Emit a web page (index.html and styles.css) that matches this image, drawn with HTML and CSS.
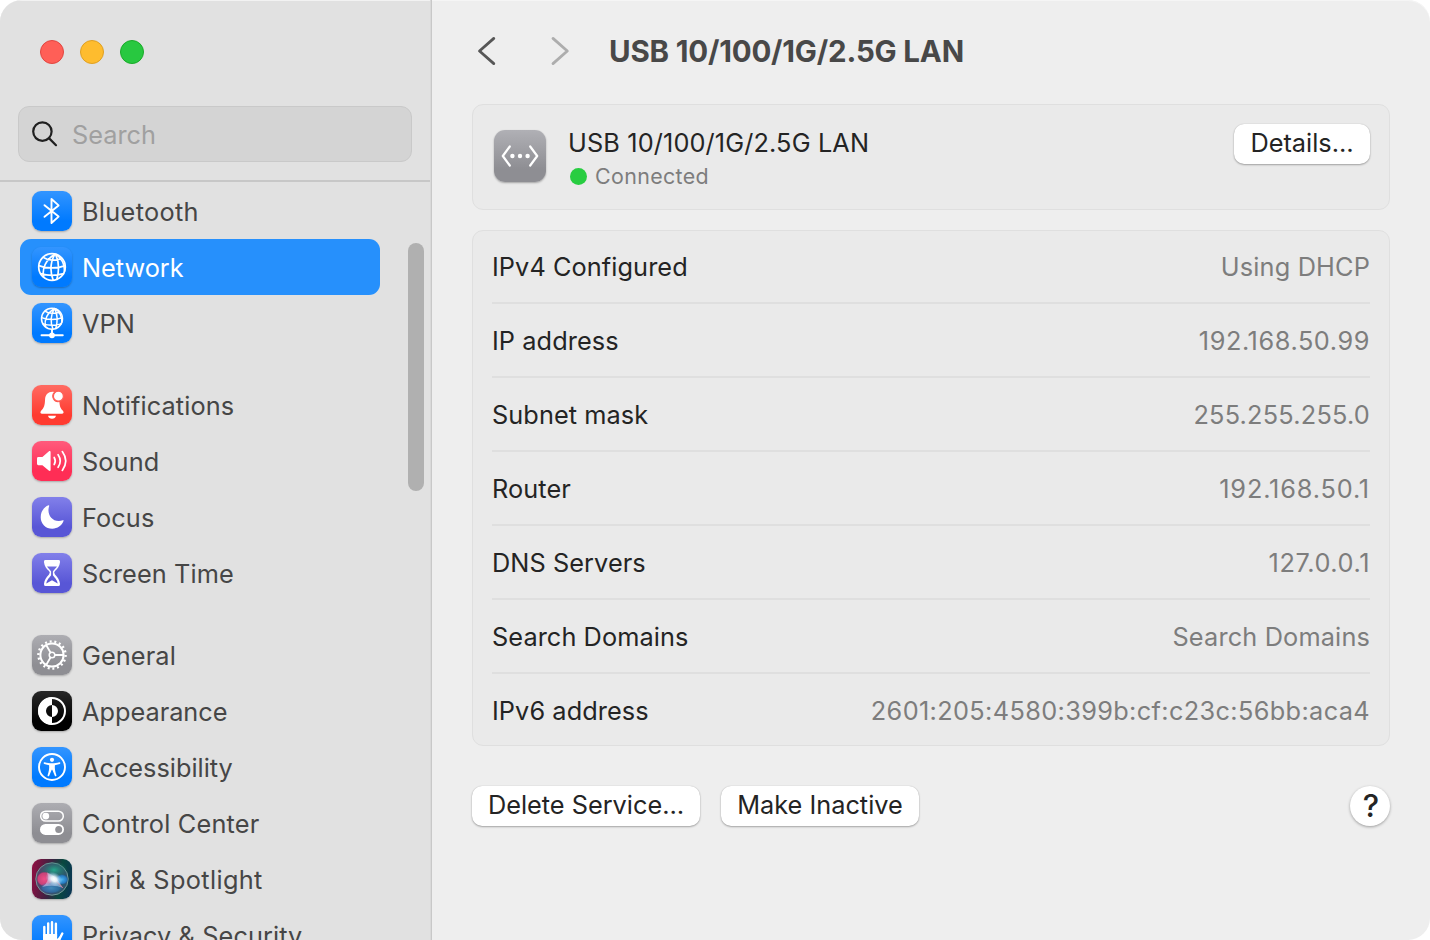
FILE: index.html
```html
<!DOCTYPE html>
<html lang="en">
<head>
<meta charset="utf-8">
<title>Network</title>
<link rel="stylesheet" href="styles.css">
</head>
<body>
<div class="window">
  <aside class="sidebar">
    <div class="lights"><span class="light red"></span><span class="light yellow"></span><span class="light green"></span></div>
    <div class="search">
      <svg class="glass" viewBox="0 0 28 28"><circle cx="11.4" cy="11.6" r="9.2"/><path d="M18.2 18.4L25 25.2"/></svg>
      <span class="search-text">Search</span>
    </div>
    <nav class="list">
      <div class="item"><span class="icon blue"><svg viewBox="0 0 40 40"><path class="line" stroke-width="1.9" d="M12.5 14.2L26.6 25.6L19.5 32V8L26.6 14.4L12.5 25.8"/></svg></span><span class="label wide">Bluetooth</span></div>
      <div class="item selected"><span class="icon blue"><svg viewBox="0 0 40 40"><g class="line" stroke-width="1.7"><circle cx="20" cy="20" r="13.3"/><path d="M22.8 7.2C14 12.5 9.8 21.5 11.6 30M22.8 7.2C18.6 15 18 25 21.2 33.2M23.6 7.4C26.8 14 27.4 23 24.8 32.4M24.5 7.6C30 11.8 32.8 18 32.4 24.5M11.2 10.4C16 13.8 24 14.2 29.5 11.2M6.8 18.6C14 21.8 26 21.6 33 18.6M8.6 26.6C15.5 28.8 25 28.6 31.6 26.6"/></g></svg></span><span class="label tight">Network</span></div>
      <div class="item"><span class="icon blue"><svg viewBox="0 0 40 40"><g class="line" stroke-width="1.5"><circle cx="20" cy="15.7" r="10.5"/><path d="M22.2 5.6C15.3 9.8 12 16.9 13.4 23.6M22.2 5.6C18.9 11.8 18.4 19.6 20.9 26.1M22.8 5.8C25.4 11 25.8 18 23.8 25.5M23.6 5.9C27.9 9.2 30.1 14.1 29.8 19.3M13 8.1C16.8 10.8 23.2 11.1 27.5 8.8M9.6 14.6C15.3 17.1 24.7 17 30.3 14.6M11 20.9C16.4 22.6 23.9 22.5 29.2 20.9"/><path stroke-width="1.9" d="M20 26.5V32M9.5 32.3H30.8"/></g><circle class="fill" cx="20" cy="32.3" r="2.9"/></svg></span><span class="label">VPN</span></div>

      <div class="item group"><span class="icon coral"><svg viewBox="0 0 40 40"><path class="fill" d="M20.5 6.7C16 6.9 13.5 9.5 13.1 13.8C12.8 20.8 12.1 22.6 9.3 25.6C7.8 27.2 8.2 28.8 10.2 28.8H29.8C31.8 28.8 32.2 27.2 30.7 25.6C28.6 23.3 27.8 21.6 27.4 17A6 6 0 0 1 22 6.9C21.5 6.7 21 6.7 20.5 6.7Z"/><path class="fill" d="M16 30.7H24C23.6 32.7 22.1 33.7 20 33.7S16.4 32.7 16 30.7Z"/><circle class="badge" cx="26.4" cy="11.2" r="5"/></svg></span><span class="label">Notifications</span></div>
      <div class="item"><span class="icon pink"><svg viewBox="0 0 40 40"><path class="fill" d="M6.4 16H10.4L16.7 10.4C17.7 9.6 18.6 10 18.6 11.2V28.8C18.6 30 17.7 30.4 16.7 29.6L10.4 24.2H6.4Q5 24.2 5 22.8V17.4Q5 16 6.4 16Z"/><path class="line" stroke-width="1.7" d="M22.2 16.5Q24.3 20 22.2 23.5M26.1 13.7Q30.4 20 26.1 26.3M30.3 10.6Q37.2 20 30.3 29.4"/></svg></span><span class="label">Sound</span></div>
      <div class="item"><span class="icon indigo"><svg viewBox="0 0 40 40"><path class="fill" d="M16.5 8.3C17 8.1 17.4 8.5 17.2 9C14.2 17 20.5 26.5 30.8 23.3C31.5 23.1 31.8 23.5 31.5 24.1C29.6 28.9 25.6 31.7 20.3 31.7C13.7 31.7 8.7 26.9 8.7 20.2C8.7 14.8 11.6 10.3 16.5 8.3Z"/></svg></span><span class="label">Focus</span></div>
      <div class="item"><span class="icon indigo"><svg viewBox="0 0 40 40"><path class="fill" fill-rule="evenodd" d="M13.3 7H26.7Q28.4 7 28 9.2C27.5 13 25.7 15.6 23 18Q21.4 19.4 23 21.6C26 24.7 27.6 27.2 28 30.7Q28.3 33 26.6 33H13.4Q11.7 33 12 30.7C12.4 27.2 14 24.7 17 21.6Q18.6 19.4 17 18C14.3 15.6 12.5 13 12 9.2Q11.6 7 13.3 7ZM15 13.5C16 15.3 18.2 16.8 19.1 18.4V22.2C17.9 24.1 14.8 26.5 14.3 30.5L20 27.3L25.7 30.5C25.2 26.5 22.1 24.1 20.9 22.2V18.4C21.8 16.8 24 15.3 25 13.5Z"/></svg></span><span class="label">Screen Time</span></div>

      <div class="item group"><span class="icon gray"><svg viewBox="0 0 40 40"><circle class="line" stroke-width="2" cx="20" cy="20" r="11.6"/><circle class="line teeth" cx="20" cy="20" r="13.6" pathLength="72"/><circle class="line" stroke-width="1.5" cx="20" cy="20" r="2.8"/><path class="line" stroke-width="1.8" d="M22.9 20H31M18.5 17.5L14.3 10.2M18.5 22.5L14.3 29.8"/></svg></span><span class="label">General</span></div>
      <div class="item"><span class="icon black"><svg viewBox="0 0 40 40"><circle class="line" stroke-width="2" cx="20" cy="20" r="13"/><path class="fill" d="M20 6.2A13.8 13.8 0 0 0 20 33.8V26A6 6 0 0 1 20 14ZM20 14A6 6 0 0 1 20 26Z"/></svg></span><span class="label tight">Appearance</span></div>
      <div class="item"><span class="icon blue"><svg viewBox="0 0 40 40"><circle class="line" stroke-width="1.9" cx="20" cy="20" r="13"/><circle class="fill" cx="20" cy="12.8" r="2.1"/><path class="fill" d="M12.7 15.2C15 15.8 17.6 16.3 20 16.3S25 15.8 27.3 15.2C28.5 15 28.8 16.5 27.7 16.9L22.9 18.3C22.5 21.8 23.3 25.1 24.4 28.2C24.7 29.3 23.3 29.8 22.8 28.7L20.3 22.8H19.7L17.2 28.7C16.7 29.8 15.3 29.3 15.6 28.2C16.7 25.1 17.5 21.8 17.1 18.3L12.3 16.9C11.2 16.5 11.5 15 12.7 15.2Z"/></svg></span><span class="label tight">Accessibility</span></div>
      <div class="item"><span class="icon gray"><svg viewBox="0 0 40 40"><rect class="line" stroke-width="1.5" x="8.7" y="8.2" width="22.6" height="9.9" rx="4.95"/><circle class="fill" cx="13.8" cy="13.1" r="3.4"/><rect class="fill" x="8" y="20.9" width="24" height="11" rx="5.5"/><circle class="knob" cx="26.7" cy="26.4" r="3.5"/></svg></span><span class="label center">Control Center</span></div>
      <div class="item"><span class="icon"><svg viewBox="0 0 40 40">
        <defs>
          <linearGradient id="edge" x1="0" y1=".35" x2="1" y2=".5"><stop offset="0" stop-color="#8c0f42"/><stop offset=".45" stop-color="#3a2340"/><stop offset=".72" stop-color="#09483f"/><stop offset="1" stop-color="#0b3752"/></linearGradient>
          <radialGradient id="rose"><stop offset="0" stop-color="#f04f88"/><stop offset=".8" stop-color="#e8407c" stop-opacity=".8"/><stop offset="1" stop-color="#d52167" stop-opacity="0"/></radialGradient>
          <radialGradient id="mint"><stop offset="0" stop-color="#25a88c"/><stop offset="1" stop-color="#16796a" stop-opacity="0"/></radialGradient>
          <radialGradient id="azure"><stop offset="0" stop-color="#48b4f0"/><stop offset=".7" stop-color="#2587dd" stop-opacity=".75"/><stop offset="1" stop-color="#125baa" stop-opacity="0"/></radialGradient>
          <radialGradient id="glow"><stop offset="0" stop-color="#fff"/><stop offset=".35" stop-color="#f0faff" stop-opacity=".9"/><stop offset="1" stop-color="#9edcff" stop-opacity="0"/></radialGradient>
        </defs>
        <rect width="40" height="40" rx="9" fill="url(#edge)"/>
        <circle cx="20" cy="20" r="16.2" fill="#456080" fill-opacity=".65" stroke="#7aa39f" stroke-width=".9"/>
        <ellipse cx="22" cy="11" rx="14" ry="9" fill="url(#mint)"/><ellipse cx="12.5" cy="20" rx="8" ry="7.5" fill="url(#rose)"/>
        <ellipse cx="30" cy="20.5" rx="6.5" ry="5.5" fill="url(#azure)"/><ellipse cx="19" cy="29" rx="12" ry="6" fill="url(#azure)" opacity=".6"/>
        <path d="M15 13.5Q24 16 31 29Q22 25 10 28Q19 22 15 13.5Z" fill="#e0e6ff" opacity=".45"/>
        <path d="M22 20L31 29" stroke="#ef6f9c" stroke-width=".8" opacity=".8"/>
        <ellipse cx="22" cy="20" rx="9" ry="6.5" fill="url(#glow)" transform="rotate(28 22 20)"/>
      </svg></span><span class="label siri">Siri &amp; Spotlight</span></div>
      <div class="item"><span class="icon blue"><svg viewBox="0 0 40 40"><path class="line" stroke-width="2.4" d="M12.3 12V24M16.2 8.4V22M20 7.2V22M23.9 8.8V22M30.3 18.5L26 27"/><path class="fill" d="M11.1 19H25.1V24L29.5 19.8L27.6 27.5C26.5 31.8 24.2 34 19.5 34C13.5 34 11.1 30 11.1 25Z"/></svg></span><span class="label">Privacy &amp; Security</span></div>
    </nav>
    <div class="scroll-thumb"></div>
  </aside>

  <main class="content">
    <header class="toolbar">
      <svg class="arrow" viewBox="0 0 20 30"><path d="M16.8 2.4L2.5 15L16.8 27.6"/></svg>
      <svg class="arrow forward" viewBox="0 0 20 30"><path d="M3 2.4L17.3 15L3 27.6"/></svg>
      <h1 class="title">USB 10/100/1G/2.5G LAN</h1>
    </header>
    <section class="card service">
      <span class="service-icon"><svg viewBox="0 0 52 52"><path class="line" stroke-width="2.2" d="M15.8 16.5L8.8 26L15.8 35.5M36.2 16.5L43.2 26L36.2 35.5"/><circle class="fill" cx="18.4" cy="26" r="2.2"/><circle class="fill" cx="26" cy="26" r="2.2"/><circle class="fill" cx="33.6" cy="26" r="2.2"/></svg></span>
      <div class="service-text">
        <div class="service-name">USB 10/100/1G/2.5G LAN</div>
        <div class="status"><span class="dot"></span><span>Connected</span></div>
      </div>
      <button class="button details">Details…</button>
    </section>
    <section class="card rows">
      <div class="row"><span>IPv4 Configured</span><span class="value text">Using DHCP</span></div>
      <div class="row"><span>IP address</span><span class="value ip">192.168.50.99</span></div>
      <div class="row"><span>Subnet mask</span><span class="value mask">255.255.255.0</span></div>
      <div class="row"><span>Router</span><span class="value router">192.168.50.1</span></div>
      <div class="row"><span>DNS Servers</span><span class="value ip">127.0.0.1</span></div>
      <div class="row"><span>Search Domains</span><span class="value text">Search Domains</span></div>
      <div class="row"><span>IPv6 address</span><span class="value ipv6">2601:205:4580:399b:cf:c23c:56bb:aca4</span></div>
    </section>
    <footer class="actions">
      <button class="button delete">Delete Service…</button>
      <button class="button inactive">Make Inactive</button>
      <button class="help">?</button>
    </footer>
  </main>
</div>
</body>
</html>
```
FILE: styles.css
```css
* { box-sizing: border-box; }
body { margin: 0; background: #fff; font: 25.3px/30px Inter, "Liberation Sans", sans-serif; color: #242424; }
button { font: inherit; color: inherit; border: 0; padding: 0; }
svg { display: block; }
.window { display: flex; width: 1430px; height: 940px; overflow: hidden; border-radius: 22px; background: #eee; box-shadow: inset 0 1px #f5f5f5; }

.sidebar { position: relative; width: 432px; height: 940px; overflow: hidden; background: #e1e1e1; border-right: 1px solid #c8c8c8; box-shadow: inset -1px 0 #d9d9d9, inset 0 1px #f2f2f2; }
.lights { display: flex; gap: 16px; padding: 40px 40px 0; }
.light { width: 24px; height: 24px; border-radius: 50%; border: 1px solid; }
.red { background: #ff5f57; border-color: #e14640; }
.yellow { background: #febc2e; border-color: #dfa023; }
.green { background: #28c840; border-color: #1aab29; }
.search { display: flex; align-items: center; width: 394px; height: 56px; margin: 42px 0 0 18px; padding-left: 12px; border: 1px solid #c9c9c9; border-radius: 11px; background: #d4d4d4; }
.glass { width: 28px; height: 28px; fill: none; stroke: #202020; stroke-width: 2.2; stroke-linecap: round; }
.search-text { margin-left: 13px; padding-top: 2px; color: #a0a0a0; }
.list { margin-top: 18px; padding-top: 1px; border-top: 2px solid #c7c7c7; width: 430px; }
.item { display: flex; align-items: center; width: 360px; height: 56px; margin-left: 20px; padding-left: 12px; border-radius: 11px; color: #464646; }
.group { margin-top: 26px; }
.selected { background: #2690fc; color: #fff; }
.icon { width: 40px; height: 40px; border-radius: 9px; box-shadow: 0 1px 2px rgba(0,0,0,.25); }
.blue { background: linear-gradient(#3395ff, #007aff 75%); }
.coral { background: linear-gradient(#ff6b62, #ff3b30 75%); }
.pink { background: linear-gradient(#ff5b7c, #ff2d55 75%); }
.indigo { background: linear-gradient(#8280ea, #5856d6 75%); }
.gray { background: linear-gradient(#adadb2, #8e8e93 75%); }
.black { background: linear-gradient(#282828, #000 75%); }
.line { fill: none; stroke: #fff; stroke-linecap: round; stroke-linejoin: round; }
.fill { fill: #fff; }
.badge { fill: #fff; stroke: #ff6057; stroke-width: 1.2; }
.knob { fill: #929297; }
.teeth { stroke-width: 2.4; stroke-linecap: butt; stroke-dasharray: 1.7 2.3; }
.label { margin-left: 10px; padding-top: 2px; white-space: nowrap; letter-spacing: .1px; }
.wide { letter-spacing: .32px; }
.tight { letter-spacing: 0; }
.center { letter-spacing: .18px; }
.siri { letter-spacing: .35px; }
.scroll-thumb { position: absolute; left: 408px; top: 243px; width: 16px; height: 248px; border-radius: 8px; background: #b0b0b0; }

.content { width: 998px; padding: 0 40px; }
.toolbar { display: flex; align-items: center; height: 104px; padding-left: 5px; }
.arrow { width: 20px; height: 30px; fill: none; stroke: #565656; stroke-width: 2.8; stroke-linecap: round; stroke-linejoin: round; margin-top: -2px; }
.forward { margin-left: 53px; stroke: #adadad; }
.title { margin: -2px 0 0 39px; font-size: 29.5px; line-height: 36px; font-weight: 650; color: #484848; white-space: nowrap; letter-spacing: -.19px; }
.card { border: 1px solid #dfdfdf; border-radius: 11px; background: #eaeaea; }
.service { display: flex; align-items: flex-start; height: 106px; padding: 0 19px 0 21px; }
.service-icon { width: 52px; height: 52px; margin-top: 25px; border-radius: 11px; background: linear-gradient(#b0b0b5, #8e8e93 75%); box-shadow: 0 1px 2px rgba(0,0,0,.3); }
.service-text { margin: 23px 0 0 22px; white-space: nowrap; }
.service-name { letter-spacing: .13px; }
.status { display: flex; align-items: center; gap: 8px; margin: 3px 0 0 2px; font-size: 21.4px; letter-spacing: .35px; color: #7d7d7d; }
.dot { width: 17px; height: 17px; border-radius: 50%; background: #28cd41; }
.button { height: 40px; border-radius: 10px; background: #fff; box-shadow: 0 1px 2px rgba(0,0,0,.3), 0 0 1px rgba(0,0,0,.22); line-height: 38px; padding-bottom: 2px; white-space: nowrap; }
.details { width: 136px; margin: 19px 0 0 auto; }
.rows { height: 516px; margin-top: 20px; padding: 0 19px; }
.row { display: flex; justify-content: space-between; padding-top: 2px; line-height: 70px; border-bottom: 2px solid #dfdfdf; white-space: nowrap; letter-spacing: .08px; }
.row:first-child { padding-top: 1px; }
.row:last-child { border-bottom: 0; }
.value { color: #7d7d7d; }
.text { letter-spacing: .16px; }
.ip { letter-spacing: .58px; }
.mask { letter-spacing: .22px; }
.router { letter-spacing: .85px; }
.ipv6 { letter-spacing: .36px; }
.actions { display: flex; align-items: center; gap: 21px; margin-top: 40px; }
.delete { width: 228px; }
.inactive { width: 198px; }
.help { width: 40px; height: 40px; margin-left: auto; border-radius: 50%; background: #fff; box-shadow: 0 1px 3px rgba(0,0,0,.35); font-size: 31px; font-weight: 500; line-height: 40px; padding-left: 2px; }
```
